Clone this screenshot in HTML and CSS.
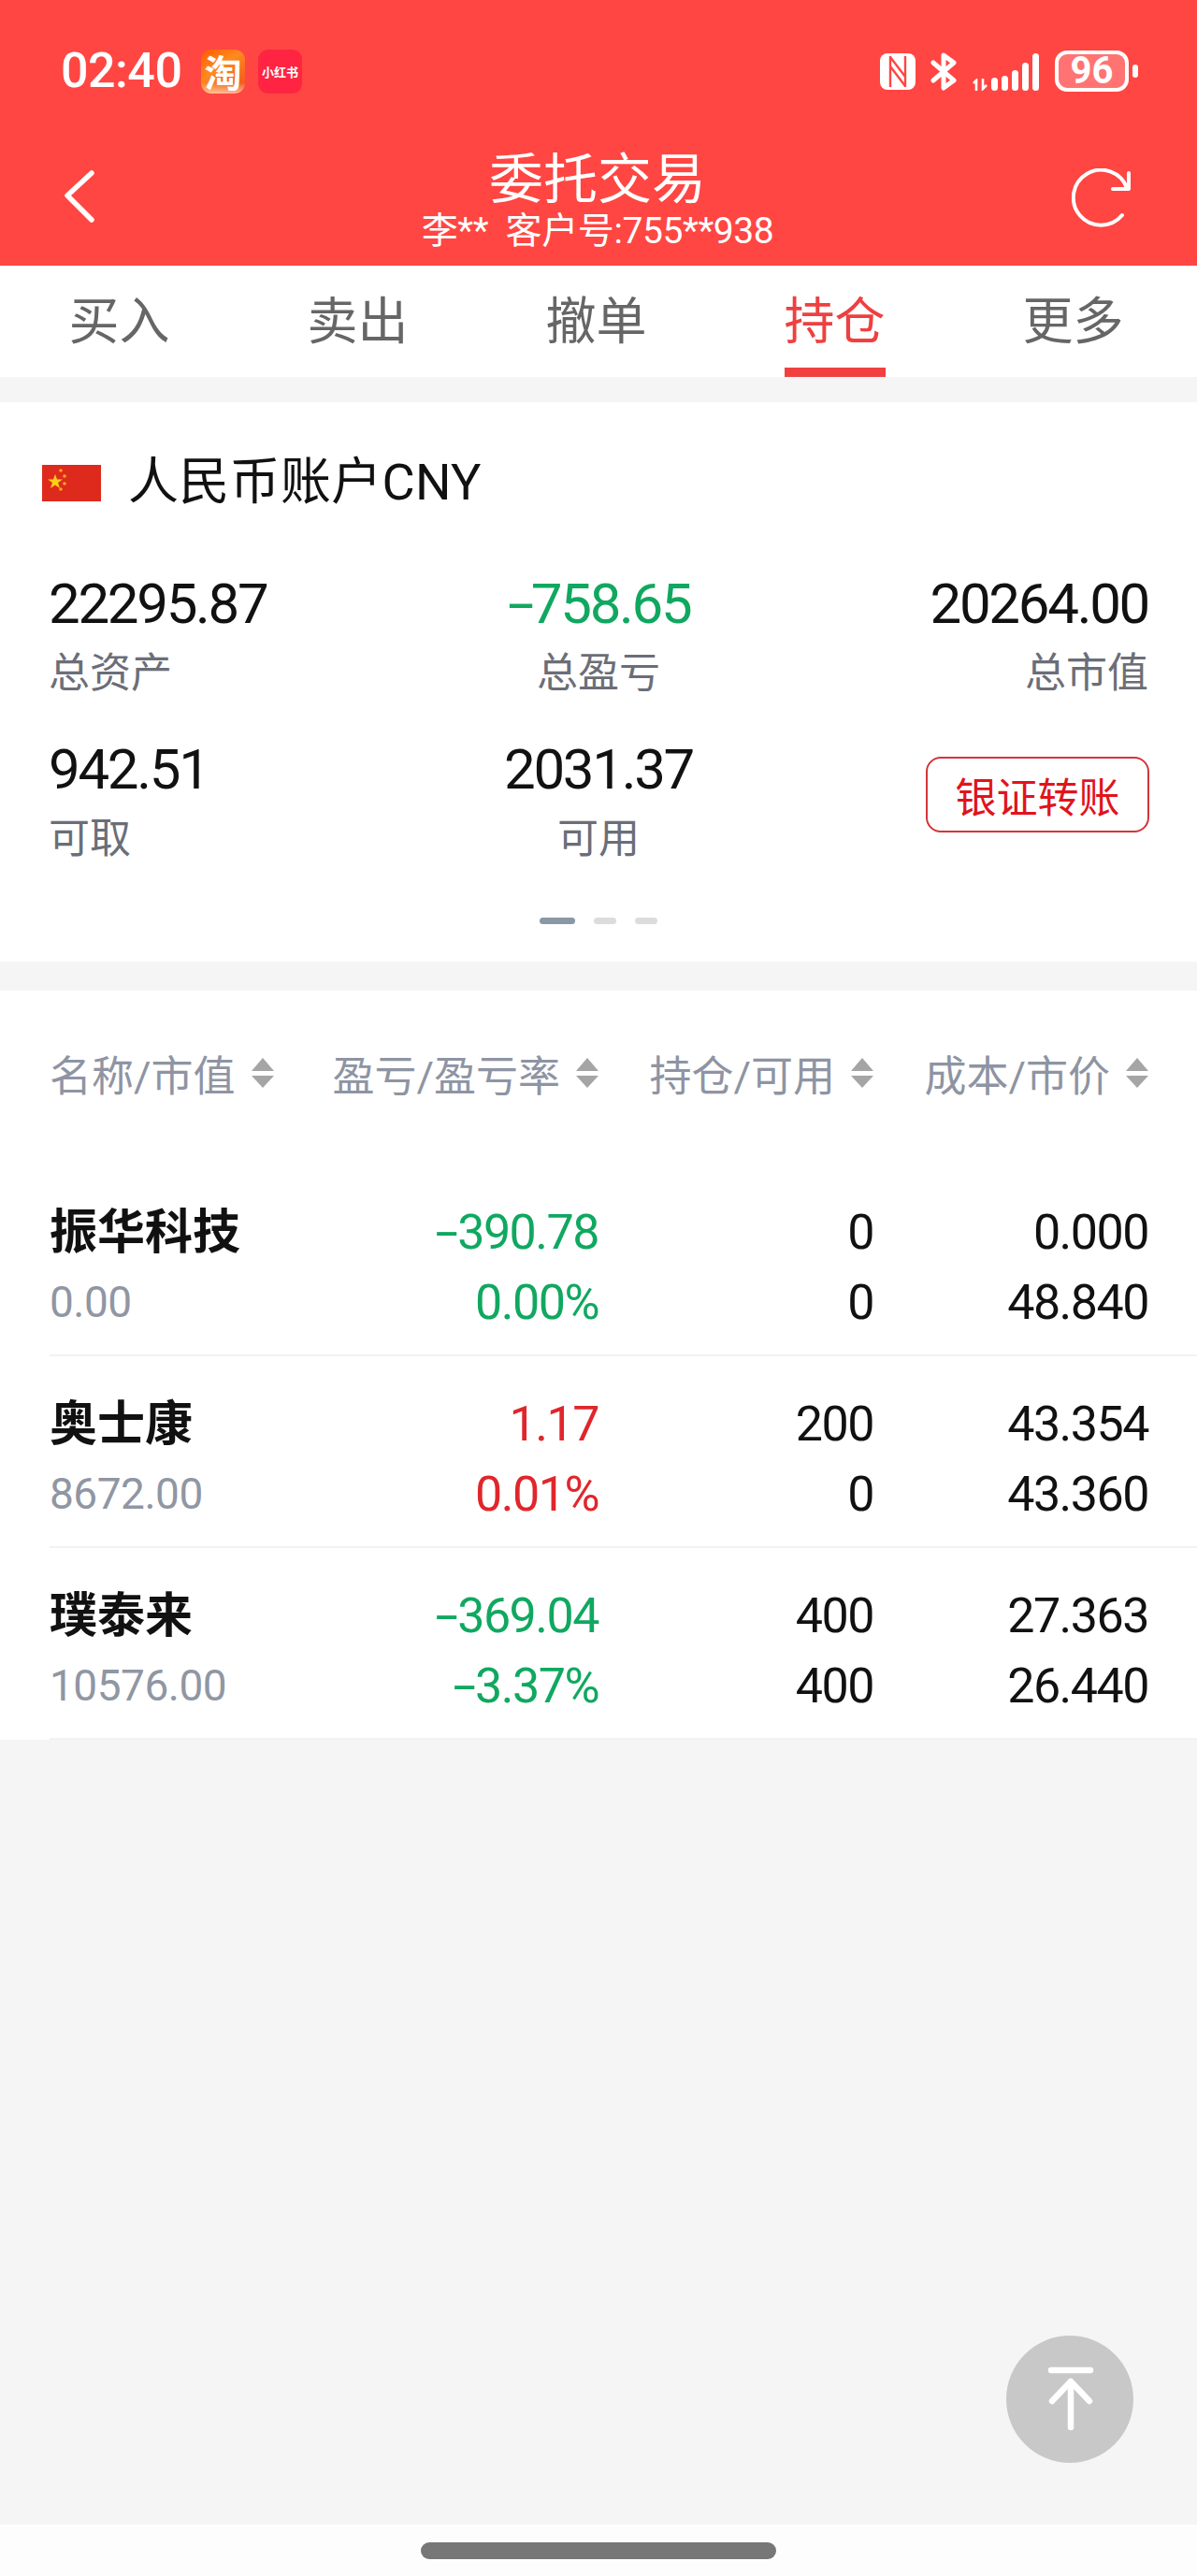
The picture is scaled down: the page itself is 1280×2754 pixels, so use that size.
FILE: index.html
```html
<!DOCTYPE html>
<html lang="zh-CN">
<head>
  <meta charset="UTF-8" />
  <meta name="viewport" content="width=device-width, initial-scale=1.0"/>
  <title>委托交易</title>
  <link rel="stylesheet" href="styles.css">
</head>
<body>
<div class="page">

  <!-- Red header -->
  <header class="header">
    <div class="status-bar">
      <div class="status-left">
        <span class="time">02:40</span>
        <span class="app-icon taobao">淘</span>
        <span class="app-icon xhs">小红书</span>
      </div>
      <div class="status-right">
        <svg class="nfc" width="38" height="39" viewBox="0 0 38 39">
          <rect width="38" height="39" rx="8" fill="#fff"/>
          <path d="M11 3 V36 M27 3 V36 M11 4 L27 25 M11 14 L27 35" fill="none" stroke="#ff4642" stroke-width="2.4"/>
        </svg>
        <svg class="bt" width="28" height="41" viewBox="0 0 28 41">
          <path d="M3 11 L25 30 L14 38 V3 L25 11 L3 30" fill="none" stroke="#fff" stroke-width="5" stroke-linejoin="round" stroke-linecap="round"/>
        </svg>
        <div class="signal">
          <svg width="16" height="13" viewBox="0 0 16 13">
            <path d="M4 13 V2 L1 5 M11 0 V11 L15 7" fill="none" stroke="#fff" stroke-width="2.6"/>
          </svg>
          <i class="bar bar1"></i>
          <i class="bar bar2"></i>
          <i class="bar bar3"></i>
          <i class="bar bar4"></i>
          <i class="bar bar5"></i>
        </div>
        <div class="battery">96</div>
        <i class="battery-nub"></i>
      </div>
    </div>

    <div class="nav-bar">
      <svg class="back" width="34" height="56" viewBox="0 0 34 56">
        <path d="M30 3 L4 27 L30 53" fill="none" stroke="#fff" stroke-width="5.5" stroke-linecap="round" stroke-linejoin="round"/>
      </svg>
      <div class="nav-title">
        <div class="title">委托交易</div>
        <div class="subtitle">李**&nbsp;&nbsp;客户号:755**938</div>
      </div>
      <svg class="refresh" width="64" height="64" viewBox="0 0 64 64">
        <path d="M59 21 A29.5 29.5 0 1 0 54 50" fill="none" stroke="#fff" stroke-width="4" stroke-linecap="round"/>
        <path d="M61 5 V22 H44" fill="none" stroke="#fff" stroke-width="4" stroke-linecap="round" stroke-linejoin="round"/>
      </svg>
    </div>
  </header>

  <!-- Tabs -->
  <nav class="tabs">
    <div class="tab"><span>买入</span></div>
    <div class="tab"><span>卖出</span></div>
    <div class="tab"><span>撤单</span></div>
    <div class="tab active"><span>持仓</span></div>
    <div class="tab"><span>更多</span></div>
  </nav>

  <main class="content">

    <!-- Account card -->
    <section class="card">
      <div class="account">
        <svg class="flag" width="63" height="39" viewBox="0 0 63 39">
          <rect width="63" height="39" fill="#de2a1c"/>
          <polygon points="14,10 16,15.5 22,15.5 17,19 19,25 14,21.5 9,25 11,19 6,15.5 12,15.5" fill="#fcd116"/>
          <circle cx="20" cy="6" r="1.8" fill="#f5a623"/>
          <circle cx="24" cy="12" r="1.8" fill="#f5a623"/>
          <circle cx="24" cy="20" r="1.8" fill="#f5a623"/>
          <circle cx="20" cy="26" r="1.8" fill="#f5a623"/>
        </svg>
        <span class="account-name">人民币账户CNY</span>
      </div>

      <div class="stats">
        <div class="stat">
          <div class="stat-value">22295.87</div>
          <div class="stat-label">总资产</div>
        </div>
        <div class="stat center">
          <div class="stat-value green"><span class="minus">-</span>758.65</div>
          <div class="stat-label">总盈亏</div>
        </div>
        <div class="stat right">
          <div class="stat-value">20264.00</div>
          <div class="stat-label">总市值</div>
        </div>
        <div class="stat">
          <div class="stat-value">942.51</div>
          <div class="stat-label">可取</div>
        </div>
        <div class="stat center">
          <div class="stat-value">2031.37</div>
          <div class="stat-label">可用</div>
        </div>
        <div class="stat right">
          <button class="transfer-btn">银证转账</button>
        </div>
      </div>

      <div class="dots">
        <i class="dot current"></i>
        <i class="dot"></i>
        <i class="dot"></i>
      </div>
    </section>

    <!-- Holdings -->
    <section class="holdings">
      <div class="table-head">
        <div class="head-cell first">名称/市值<i class="sort"></i></div>
        <div class="head-cell">盈亏/盈亏率<i class="sort"></i></div>
        <div class="head-cell">持仓/可用<i class="sort"></i></div>
        <div class="head-cell">成本/市价<i class="sort"></i></div>
      </div>

      <div class="row">
        <div class="cell first">
          <div class="name">振华科技</div>
          <div class="sub">0.00</div>
        </div>
        <div class="cell green">
          <div><span class="minus">-</span>390.78</div>
          <div>0.00%</div>
        </div>
        <div class="cell">
          <div>0</div>
          <div>0</div>
        </div>
        <div class="cell">
          <div>0.000</div>
          <div>48.840</div>
        </div>
      </div>

      <div class="row">
        <div class="cell first">
          <div class="name">奥士康</div>
          <div class="sub">8672.00</div>
        </div>
        <div class="cell red">
          <div>1.17</div>
          <div>0.01%</div>
        </div>
        <div class="cell">
          <div>200</div>
          <div>0</div>
        </div>
        <div class="cell">
          <div>43.354</div>
          <div>43.360</div>
        </div>
      </div>

      <div class="row">
        <div class="cell first">
          <div class="name">璞泰来</div>
          <div class="sub">10576.00</div>
        </div>
        <div class="cell green">
          <div><span class="minus">-</span>369.04</div>
          <div><span class="minus">-</span>3.37%</div>
        </div>
        <div class="cell">
          <div>400</div>
          <div>400</div>
        </div>
        <div class="cell">
          <div>27.363</div>
          <div>26.440</div>
        </div>
      </div>
    </section>

    <!-- Back to top -->
    <button class="to-top">
      <svg width="56" height="72" viewBox="0 0 56 72">
        <path d="M8 5 H50 M29 17 V66 M9 38 L29 17 L49 38" fill="none" stroke="#fff" stroke-width="6.5" stroke-linecap="round" stroke-linejoin="round"/>
      </svg>
    </button>
  </main>

  <div class="home-bar"><i class="home-pill"></i></div>
</div>
</body>
</html>
```

FILE: styles.css
```css
* {
  box-sizing: border-box;
}

body {
  margin: 0;
  font-family: Roboto, "Noto Sans CJK SC", sans-serif;
  color: #111;
  background-color: #f5f5f5;
}

i {
  display: block;
}

.page {
  height: 2754px;
  display: flex;
  flex-direction: column;
  overflow: hidden;
}

/* Header */
.header {
  height: 284px;
  background-color: #ff4642;
  color: white;
}

.status-bar {
  height: 152px;
  padding: 0 63px 0 65px;
  display: flex;
  align-items: center;
  justify-content: space-between;
}

.status-left {
  display: flex;
  align-items: center;
}

.time {
  font-size: 52px;
  font-weight: 500;
  line-height: 52px;
  width: 150px;
  letter-spacing: -0.5px;
}

.app-icon {
  width: 47px;
  height: 47px;
  display: flex;
  align-items: center;
  justify-content: center;
  border-radius: 11px;
  font-weight: bold;
}

.taobao {
  font-size: 40px;
  background:
    linear-gradient(to bottom, transparent 75%, rgba(255, 225, 190, 0.75) 100%),
    linear-gradient(145deg, #ff5a00 0%, #ff8a1e 40%, #f04a22 100%);
}

.xhs {
  margin-left: 14px;
  font-size: 13px;
  background-color: #ff2442;
}

.status-right {
  display: flex;
  align-items: center;
}

.nfc {
  margin-right: 16px;
}

.bt {
  margin-right: 17px;
}

.signal {
  height: 41px;
  display: flex;
  align-items: flex-end;
  gap: 4px;
  margin-right: 17px;
}

.bar {
  width: 7px;
  background-color: white;
  border-radius: 4px;
}

.bar1 { height: 14px; }
.bar2 { height: 16px; }
.bar3 { height: 22px; }
.bar4 { height: 30px; }
.bar5 { height: 40px; }

.battery {
  width: 79px;
  height: 44px;
  border: 4px solid #fff;
  border-radius: 13px;
  background-color: #ff7472;
  font-size: 40px;
  font-weight: bold;
  line-height: 36px;
  text-align: center;
}

.battery-nub {
  width: 6px;
  height: 14px;
  margin-left: 4px;
  background-color: white;
  border-radius: 3px;
}

.nav-bar {
  height: 132px;
  padding: 0 70px 0 68px;
  display: grid;
  grid-template-columns: 1fr auto 1fr;
  align-items: center;
}

.back {
  margin-top: -16px;
}

.refresh {
  margin-top: -12px;
  justify-self: end;
}

.nav-title {
  text-align: center;
  margin-top: -6px;
}

.title {
  font-size: 58px;
  line-height: 64px;
}

.subtitle {
  font-size: 39px;
  line-height: 46px;
  letter-spacing: -0.4px;
}

/* Tabs */
.tabs {
  height: 119px;
  padding-right: 5px;
  display: grid;
  grid-template-columns: repeat(5, 1fr);
  background-color: white;
}

.tab {
  display: flex;
  justify-content: center;
  font-size: 54px;
  color: #666;
}

.tab span {
  height: 100%;
  display: flex;
  align-items: center;
  padding-top: 2px;
  border-bottom: 10px solid transparent;
}

.tab.active {
  color: #ee4040;
}

.tab.active span {
  border-bottom-color: #f04040;
}

.content {
  flex: 1;
  position: relative;
}

/* Account card */
.card {
  margin-top: 27px;
  margin-bottom: 31px;
  padding: 60px 52px 40px 45px;
  background-color: white;
}

.account {
  height: 52px;
  display: flex;
  align-items: center;
  gap: 29px;
}

.account-name {
  font-size: 54px;
  line-height: 52px;
  letter-spacing: 0.3px;
}

.stats {
  margin-top: 74px;
  padding-left: 7px;
  display: grid;
  grid-template-columns: repeat(3, 1fr);
  row-gap: 47px;
}

.stat.center {
  text-align: center;
}

.stat.right {
  text-align: right;
}

.stat-value {
  height: 60px;
  font-size: 60px;
  line-height: 60px;
  letter-spacing: -2.3px;
  margin-bottom: 18px;
}

.stat-label {
  height: 52px;
  font-size: 44px;
  line-height: 52px;
  color: #6b6e78;
}

.green {
  color: #10a860;
}

.red {
  color: #e0262c;
}

.minus {
  display: inline-block;
  margin: 0 6px;
  transform: scaleX(1.7);
}

.transfer-btn {
  width: 239px;
  height: 81px;
  margin-top: 16px;
  margin-right: -1px;
  padding: 0;
  font-family: inherit;
  font-size: 44px;
  color: #e0141c;
  background-color: white;
  border: 2px solid #d3343a;
  border-radius: 16px;
}

.dots {
  margin-top: 58px;
  padding-left: 7px;
  display: flex;
  justify-content: center;
  gap: 20px;
}

.dot {
  width: 24px;
  height: 7px;
  border-radius: 4px;
  background-color: #dcdcdc;
}

.dot.current {
  width: 38px;
  background-color: #8a97a6;
}

/* Holdings table */
.holdings {
  background-color: white;
}

.table-head,
.row {
  display: grid;
  grid-template-columns: 287px 300px 294px 294px;
}

.table-head {
  height: 186px;
  padding: 0 0 10px 53px;
}

.head-cell {
  display: flex;
  align-items: center;
  justify-content: flex-end;
  font-size: 45px;
  color: #8e94a3;
  white-space: nowrap;
}

.head-cell.first {
  justify-content: flex-start;
}

.sort {
  width: 24px;
  height: 32px;
  margin-left: 17px;
  display: flex;
  flex-direction: column;
  justify-content: space-between;
}

.sort::before,
.sort::after {
  content: "";
  border-left: 12px solid transparent;
  border-right: 12px solid transparent;
}

.sort::before {
  border-bottom: 14px solid #a5a5a5;
}

.sort::after {
  border-top: 13px solid #a5a5a5;
}

.row {
  height: 205px;
  margin-left: 53px;
  padding-top: 35px;
  border-bottom: 2px solid #f2f2f2;
}

.cell {
  text-align: right;
  font-size: 52px;
  line-height: 75px;
  letter-spacing: -1.5px;
}

.cell.first {
  text-align: left;
}

.name {
  font-size: 51px;
  font-weight: bold;
  letter-spacing: 0;
}

.sub {
  font-size: 46px;
  letter-spacing: -0.5px;
  color: #9096a3;
}

/* Back to top */
.to-top {
  position: absolute;
  top: 2094px;
  right: 68px;
  width: 136px;
  height: 136px;
  padding: 0;
  display: flex;
  align-items: center;
  justify-content: center;
  border: none;
  border-radius: 50%;
  background-color: #c8c8c8;
}

/* Gesture bar */
.home-bar {
  height: 55px;
  display: flex;
  align-items: center;
  justify-content: center;
  background-color: #fdfdfd;
}

.home-pill {
  width: 380px;
  height: 18px;
  border-radius: 9px;
  background-color: #777;
}
```
